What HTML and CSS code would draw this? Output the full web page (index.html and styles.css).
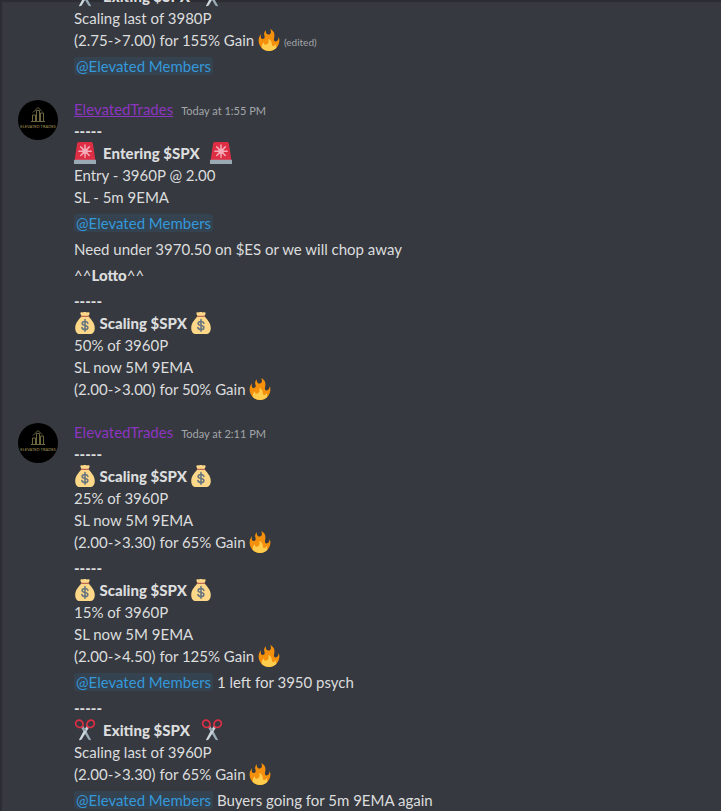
FILE: index.html
```html
<!DOCTYPE html>
<html lang="en">
<head>
    <meta charset="UTF-8">
    <meta name="viewport" content="width=device-width, initial-scale=1.0">
    <title>ElevatedTrades</title>
    <link rel="stylesheet" href="styles.css">
</head>
<body>
    <!-- Shared icons -->
    <svg class="icon-defs" aria-hidden="true">
        <symbol id="fire" viewBox="0 0 36 36">
            <path fill="#F4900C" d="M35 19c0-2.062-.367-4.039-1.04-5.868-.46 5.389-3.333 8.157-6.335 6.868-2.812-1.208-.917-5.917-.777-8.164.236-3.809-.012-8.169-6.931-11.794 2.875 5.5.333 8.917-2.333 9.125-2.958.231-5.667-2.542-4.667-7.042-3.238 2.386-3.332 6.402-2.333 9 1.042 2.708-.042 4.958-2.583 5.208-2.84.28-4.418-3.041-2.963-8.333C2.52 10.965 1 14.805 1 19c0 9.389 7.611 17 17 17s17-7.611 17-17z"/>
            <path fill="#FFCC4D" d="M28.394 23.999c.148 3.084-2.561 4.293-4.019 3.709-2.106-.843-1.541-2.291-2.083-5.291s-2.625-5.083-5.708-6c2.25 6.333-1.247 8.667-3.08 9.084-1.872.426-3.753-.001-3.968-4.007C7.352 23.668 6 26.676 6 30c0 .368.023.73.055 1.09C9.125 34.124 13.342 36 18 36s8.875-1.876 11.945-4.91c.032-.36.055-.722.055-1.09 0-2.187-.584-4.236-1.606-6.001z"/>
        </symbol>
        <symbol id="siren" viewBox="0 0 36 36">
            <path fill="#DD2E44" d="M5 3c.3-2 1.5-3 3.5-3h19C29.5 0 30.700 1 31 3l4 27H1z"/>
            <path fill="none" stroke="#F4ABBA" stroke-width="2.4" stroke-linecap="round" d="M18 5v20M8 15h20M11 8l14 14M25 8L11 22"/>
            <circle cx="18" cy="15" r="4.5" fill="#F4ABBA"/>
            <path fill="#99AAB5" d="M2 29h32c1.3 0 2 .7 2 2v5H0v-5c0-1.3.7-2 2-2z"/>
        </symbol>
        <symbol id="bag" viewBox="0 0 36 36">
            <path fill="#FDD888" d="M12 7C9 12 2 17 2 26c0 6 3 10 8 10h16c5 0 8-4 8-10 0-9-7-14-10-19z"/>
            <path fill="#FDD888" d="M11 1c2-1.5 3 .3 4.5-.5s3-.8 4.5 0S23 0 25 1c1.5.8-.5 4-1.5 6h-11C11.5 5 9.5 1.8 11 1z"/>
            <path fill="#BF6952" d="M12 6h12c1.2 0 1.2 2.2 0 2.2H12c-1.2 0-1.2-2.2 0-2.2z"/>
            <path fill="none" stroke="#67757F" stroke-width="2.6" stroke-linecap="round" stroke-linejoin="round" d="M18 12.5v19M22.7 18.5c-.8-2-2.5-3-4.7-3-2.7 0-4.7 1.3-4.7 3.3 0 4.7 9.4 1.7 9.4 6.4 0 2.2-2.2 3.5-4.7 3.5-2.7 0-4.5-1.2-5-3.3"/>
        </symbol>
        <symbol id="scissors" viewBox="0 0 36 36">
            <path fill="#99AAB5" d="M11 13l4-2 7 12 6 11.5c-2.5 1-4.5-.5-5.5-2.5z"/>
            <path fill="#CCD6DD" d="M25 13l-4-2-7 12L8 34.5c2.5 1 4.5-.5 5.5-2.5z"/>
            <path fill="none" stroke="#DD2E44" stroke-width="2.8" d="M14 12.5C11 15 5 14 3.3 10 1.5 6 3.5 2.5 7.5 2c4-.3 7.5 3 7.3 7zM22 12.5c3 2.5 9 1.5 10.7-2.5 1.8-4-.2-7.500-4.2-8-4-.3-7.5 3-7.3 7z"/>
            <circle cx="18" cy="18" r="1.3" fill="#66757F"/>
        </symbol>
        <symbol id="avatar" viewBox="0 0 40 40">
            <circle cx="20" cy="20" r="20" fill="#000"/>
            <path fill="none" stroke="#6d673f" stroke-width="1" d="M14.5 21v-6h3v6M18.5 21V10.5h3V21M22.5 21v-8h3v8M13 21.5h14M15 12.5L20 7.5l4 4"/>
            <text x="20" y="28" text-anchor="middle" class="avatar-text">ELEVATED TRADES</text>
        </symbol>
    </svg>

    <main class="chat">
        <div class="message">
            <strong><svg class="emoji"><use href="#scissors"/></svg>&nbsp; Exiting $SPX &nbsp;&nbsp;<svg class="emoji"><use href="#scissors"/></svg></strong><br>
            Scaling last of 3980P<br>
            (2.75-&gt;7.00) for 155% Gain <svg class="emoji"><use href="#fire"/></svg> <span class="edited">(edited)</span>
        </div>
        <div class="message"><a href="#" class="mention">@Elevated Members</a></div>

        <!-- 1:55 PM -->
        <div class="message group-start">
            <svg class="avatar"><use href="#avatar"/></svg>
            <div class="message-header"><a href="#" class="username active">ElevatedTrades</a><time>Today at 1:55 PM</time></div>
            <strong>-----</strong><br>
            <strong><svg class="emoji"><use href="#siren"/></svg>&nbsp; Entering $SPX &nbsp;&nbsp;<svg class="emoji"><use href="#siren"/></svg></strong><br>
            Entry - 3960P @ 2.00<br>
            SL - 5m 9EMA
        </div>
        <div class="message"><a href="#" class="mention">@Elevated Members</a></div>
        <div class="message">Need under 3970.50 on $ES or we will chop away</div>
        <div class="message">^^<strong>Lotto</strong>^^</div>
        <div class="message">
            <strong>-----</strong><br>
            <strong><svg class="emoji"><use href="#bag"/></svg> Scaling $SPX <svg class="emoji"><use href="#bag"/></svg></strong><br>
            50% of 3960P<br>
            SL now 5M 9EMA<br>
            (2.00-&gt;3.00) for 50% Gain <svg class="emoji"><use href="#fire"/></svg>
        </div>

        <!-- 2:11 PM -->
        <div class="message group-start">
            <svg class="avatar"><use href="#avatar"/></svg>
            <div class="message-header"><a href="#" class="username">ElevatedTrades</a><time>Today at 2:11 PM</time></div>
            <strong>-----</strong><br>
            <strong><svg class="emoji"><use href="#bag"/></svg> Scaling $SPX <svg class="emoji"><use href="#bag"/></svg></strong><br>
            25% of 3960P<br>
            SL now 5M 9EMA<br>
            (2.00-&gt;3.30) for 65% Gain <svg class="emoji"><use href="#fire"/></svg>
        </div>
        <div class="message">
            <strong>-----</strong><br>
            <strong><svg class="emoji"><use href="#bag"/></svg> Scaling $SPX <svg class="emoji"><use href="#bag"/></svg></strong><br>
            15% of 3960P<br>
            SL now 5M 9EMA<br>
            (2.00-&gt;4.50) for 125% Gain <svg class="emoji"><use href="#fire"/></svg>
        </div>
        <div class="message"><a href="#" class="mention">@Elevated Members</a> 1 left for 3950 psych</div>
        <div class="message">
            <strong>-----</strong><br>
            <strong><svg class="emoji"><use href="#scissors"/></svg>&nbsp; Exiting $SPX &nbsp;&nbsp;<svg class="emoji"><use href="#scissors"/></svg></strong><br>
            Scaling last of 3960P<br>
            (2.00-&gt;3.30) for 65% Gain <svg class="emoji"><use href="#fire"/></svg>
        </div>
        <div class="message"><a href="#" class="mention">@Elevated Members</a> Buyers going for 5m 9EMA again</div>
    </main>
</body>
</html>
```

FILE: styles.css
```css
body {
    margin: 0;
    background-color: #36393f;
    color: #dcddde;
    font-family: Lato, "Open Sans", sans-serif;
    font-size: 15px;
    line-height: 22px;
}

strong {
    font-weight: 900;
}

.icon-defs {
    display: none;
}

/* newest message stays at the bottom */
.chat {
    display: flex;
    flex-direction: column;
    justify-content: flex-end;
    height: 100vh;
    overflow: hidden;
    box-shadow: inset 2px 2px 1px rgba(0, 0, 0, 0.2);
}

.message {
    position: relative;
    flex-shrink: 0;
    padding: 2px 16px 2px 74px;
}

.message:last-child {
    padding-bottom: 0;
}

.group-start {
    margin-top: 17px;
}

.message-header {
    display: flex;
    align-items: baseline;
    gap: 8px;
}

.avatar {
    position: absolute;
    left: 18px;
    top: 4px;
    width: 40px;
    height: 40px;
}

.avatar-text {
    font-family: Lato, sans-serif;
    font-size: 4px;
    fill: #a79b5c;
}

.username {
    color: #8c35c0;
    text-decoration: none;
}

.username.active {
    text-decoration: underline;
}

time {
    color: #a3a6aa;
    font-size: 11px;
    line-height: 12px;
}

.edited {
    color: #a3a6aa;
    font-size: 10px;
    line-height: 10px;
}

.emoji {
    width: 22px;
    height: 22px;
    vertical-align: bottom;
}

.mention {
    padding: 0 2px;
    border-radius: 3px;
    background-color: #34434f;
    color: #3498db;
    text-decoration: none;
}
```
